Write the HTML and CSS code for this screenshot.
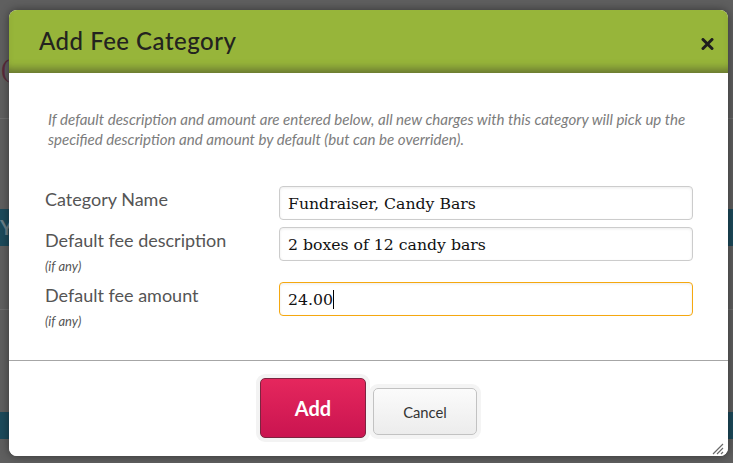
FILE: index.html
```html
<!DOCTYPE html>
<html>
<head>
<meta charset="utf-8">
<link rel="stylesheet" href="styles.css">
</head>
<body>
<div class="page">
  <div class="bg-top"><span class="bg-glyph">(</span></div>
  <div class="bg-line bg-l1"></div>
  <div class="bg-gap g1"></div>
  <div class="bg-band b1"><span class="bg-letter">Y</span></div>
  <div class="bg-gap g2"></div>
  <div class="bg-line"></div>
  <div class="bg-gap g3"></div>
  <div class="bg-band b2"></div>
</div>

<div class="dialog">
  <div class="dlg-header">
    <h1 class="dlg-title">Add Fee Category</h1>
    <button class="dlg-close" aria-label="close">
      <svg width="13" height="12" viewBox="0 0 13 12"><path d="M2 1.5 L11 10.5 M11 1.5 L2 10.5" stroke="#1e1e1e" stroke-width="3" stroke-linecap="round"/></svg>
    </button>
  </div>
  <div class="dlg-body">
    <p class="hint">If default description and amount are entered below, all new charges with this category will pick up the specified description and amount by default (but can be overriden).</p>
    <div class="form">
      <div class="lbl"><div class="lbl-main">Category Name</div></div>
      <div class="field"><input class="inp" type="text" value="Fundraiser, Candy Bars"></div>
      <div class="lbl"><div class="lbl-main">Default fee description</div><div class="lbl-sub">(if any)</div></div>
      <div class="field"><input class="inp" type="text" value="2 boxes of 12 candy bars"></div>
      <div class="lbl"><div class="lbl-main">Default fee amount</div><div class="lbl-sub">(if any)</div></div>
      <div class="field"><div class="inp focus">24.00<span class="caret"></span></div></div>
    </div>
  </div>
  <div class="dlg-footer">
    <button class="btn btn-add">Add</button>
    <button class="btn btn-cancel">Cancel</button>
  </div>
  <svg class="grip" width="13" height="13" viewBox="0 0 13 13"><path d="M12 2 L2 12 M12 6 L6 12 M12 10 L10 12" stroke="#6a6a6a" stroke-width="1.2"/></svg>
</div>
</body>
</html>
```
FILE: styles.css
```css
* { box-sizing: border-box; }
html, body { margin: 0; padding: 0; }
body {
  width: 733px;
  height: 463px;
  overflow: hidden;
  background: #5f5f5f;
  font-family: "Lato", "Open Sans", sans-serif;
  position: relative;
}
.page { display: flex; flex-direction: column; }
.bg-top { height: 118px; padding-top: 54px; padding-left: 1px; }
.bg-glyph { font-family: "Liberation Serif", serif; font-size: 26px; color: #5a2a3a; }
.bg-line { height: 1px; background: #6e6e6e; }
.bg-gap.g1 { height: 90px; }
.bg-band { background: #1c4a5b; color: #6a7f88; }
.bg-band.b1 { height: 37px; font-family: "Lato", sans-serif; font-size: 20px; font-weight: 700; line-height: 37px; padding-left: 0; }
.bg-gap.g2 { height: 63px; }
.bg-gap.g3 { height: 102px; }
.bg-band.b2 { height: 27px; }

.dialog {
  position: absolute;
  left: 9px;
  top: 10px;
  width: 719px;
  height: 446px;
  background: #ffffff;
  border-radius: 8px;
  box-shadow: 0 0 10px rgba(0,0,0,0.45);
  display: flex;
  flex-direction: column;
  overflow: hidden;
}
.dlg-header {
  height: 63px;
  background: #97b53a;
  box-shadow: inset 0 -9px 8px -5px rgba(60,60,40,0.55);
  display: flex;
  align-items: center;
  justify-content: space-between;
  padding: 0 14px 0 30px;
}
.dlg-title {
  margin: 0;
  font-family: "Lato", sans-serif;
  font-weight: 500;
  font-size: 24px;
  letter-spacing: 0.5px;
  color: #23231f;
  padding-bottom: 2px;
}
.dlg-close {
  border: 0;
  background: none;
  padding: 0;
  width: 13px;
  height: 12px;
  margin-top: 4px;
  display: block;
}
.dlg-close svg { display: block; }

.dlg-body { flex: 0 0 auto; height: 288px; padding: 36px 35px 0 36px; border-bottom: 1px solid #a6a6a6; }
.hint {
  margin: 0 0 37px 3px;
  font-family: "Lato", sans-serif;
  font-style: italic;
  font-size: 15.1px;
  line-height: 20px;
  color: #7c7c7c;
}
.form {
  display: grid;
  grid-template-columns: 234px 414px;
  row-gap: 7px;
}
.lbl { padding-top: 3px; }
.lbl-main { font-size: 18px; line-height: 20px; color: #555555; }
.lbl-sub { margin-top: 8px; font-size: 13px; line-height: 17px; font-style: italic; color: #555; }
.inp {
  width: 414px;
  height: 34px;
  border: 1px solid #cccccc;
  border-radius: 4px;
  box-shadow: inset 0 1px 3px rgba(0,0,0,0.08);
  padding: 0 8px;
  font-family: "DejaVu Serif", serif;
  font-size: 15.7px;
  color: #111;
  background: #fff;
  outline: none;
  display: flex;
  align-items: center;
}
.inp.focus { border-color: #f5a810; }
.caret { display: inline-block; width: 1px; height: 19px; background: #000; margin-left: 0; }

.dlg-footer {
  flex: 1;
  display: flex;
  justify-content: center;
  align-items: center;
  gap: 7px;
  background: #ffffff;
  padding-bottom: 2px;
}
.btn {
  border-radius: 5px;
  cursor: pointer;
  font-family: "Lato", sans-serif;
}
.btn-add {
  width: 106px;
  height: 60px;
  background: linear-gradient(#e5275d, #ca1450);
  border: 1px solid #7d2440;
  color: #fff;
  font-size: 20px;
  font-weight: 700;
  box-shadow: 0 0 0 4px #f3f3f3;
}
.btn-cancel {
  width: 104px;
  height: 47px;
  background: linear-gradient(#fbfbfb, #ececec);
  border: 1px solid #c2c2c2;
  color: #333;
  font-size: 14.8px;
  box-shadow: 0 0 0 4px #f4f4f4;
  margin-top: 8px;
}
.grip { position: absolute; right: 4px; bottom: 1px; }
```
